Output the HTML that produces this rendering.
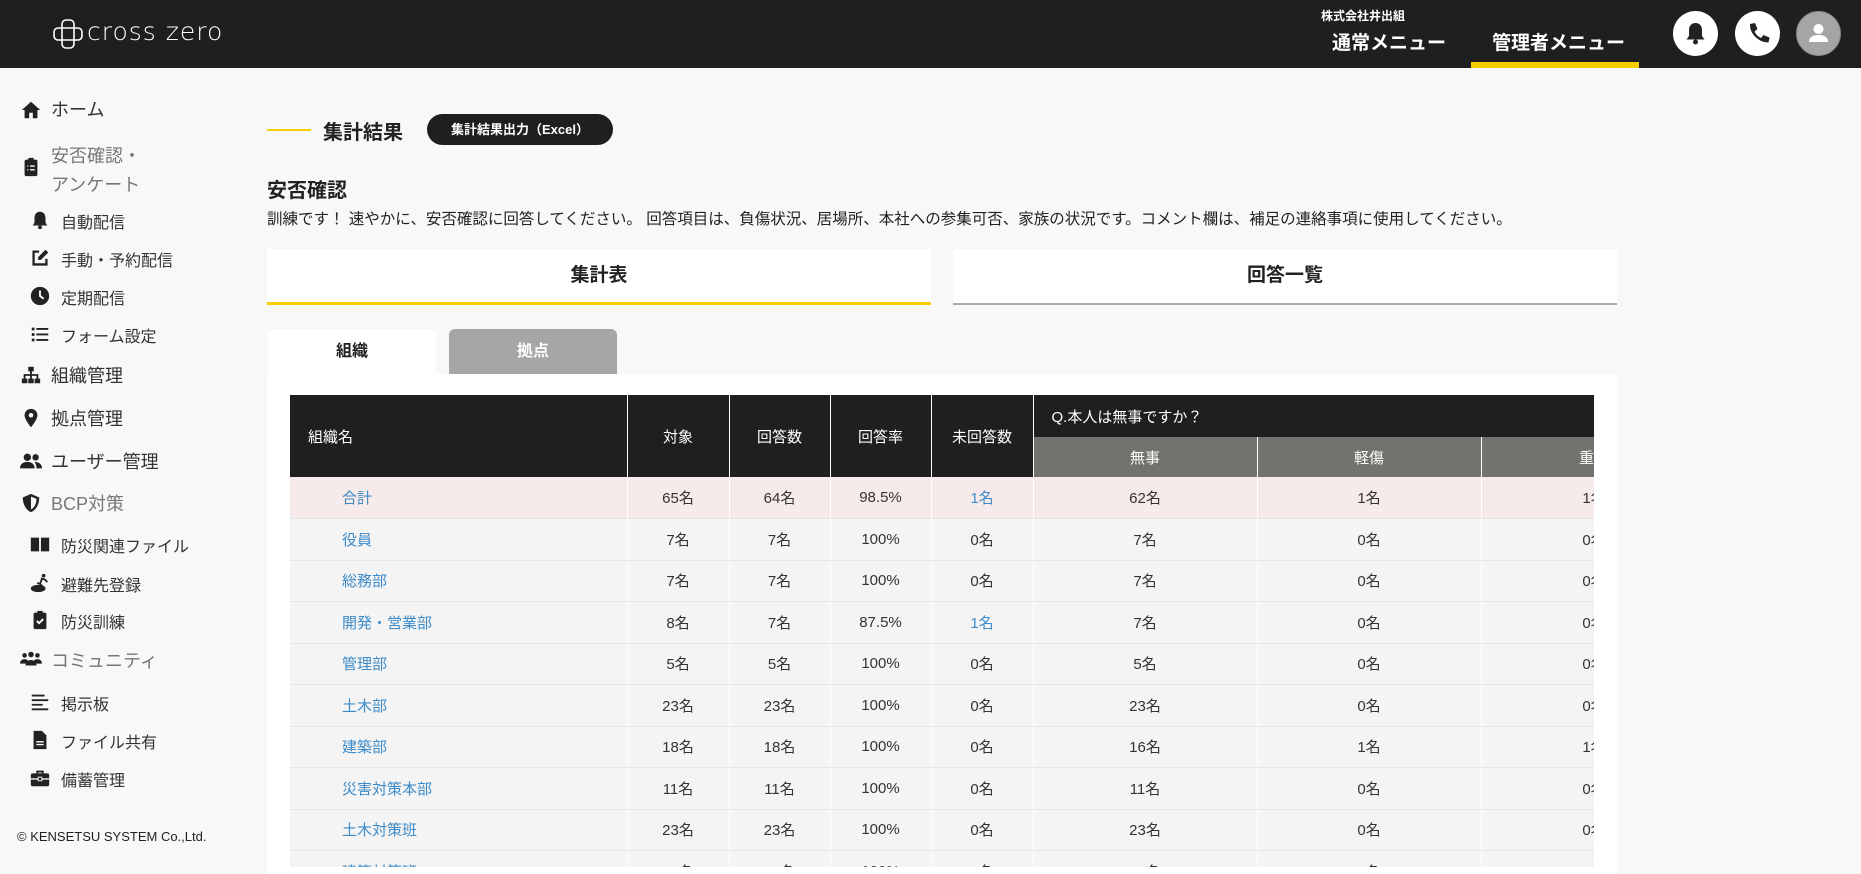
<!DOCTYPE html>
<html><head><meta charset="utf-8"><style>
*{margin:0;padding:0;box-sizing:border-box}
body{width:1861px;height:867px;overflow:hidden;background:#f8f8f8;font-family:"Liberation Sans","Noto Sans CJK JP",sans-serif;color:#222;position:relative}
.hd{position:absolute;left:0;top:0;width:1861px;height:68px;background:#1f1f1f;color:#fff}
.a{position:absolute}
.nav{font-size:18px;color:#333;white-space:nowrap}
.nav .i{position:absolute;left:20px;width:22px;height:22px}
.main{font-size:18px}
.sub{font-size:16px}
.g{color:#777}
.card{position:absolute;left:267px;top:374px;width:1350px;height:500px;background:#fff}
table{position:absolute;left:290px;top:395px;border-collapse:collapse;table-layout:fixed;font-size:15px}
td,th{height:41.5px;text-align:center;border-right:1px solid #fff;border-bottom:1px solid #e6e6e6;color:#333;background:#f4f4f4;font-weight:normal;white-space:nowrap;overflow:hidden}
th{background:#1f1f1f;color:#fff;border-bottom:none}
th.s{background:#74726d;height:40px}
td.n{text-align:left;padding-left:52px;color:#3d8bc9}
tr.p td{background:#f6eaea}
.b{color:#3d8bc9!important}
</style></head><body>
<div class="hd">
 <svg class="a" style="left:53px;top:19px" width="30" height="30" viewBox="0 0 30 30" fill="none" stroke="#fff" stroke-width="1.6"><rect x="9" y="1" width="12" height="28" rx="4"/><rect x="1" y="9" width="28" height="12" rx="4"/></svg>
 <div class="a" style="left:87px;top:17px;font-size:25px;font-weight:300;letter-spacing:1px;font-family:'DejaVu Sans','Liberation Sans',sans-serif;font-weight:200">cross zero</div>
 <div class="a" style="left:1321px;top:7px;font-size:12px;font-weight:bold">株式会社井出組</div>
 <div class="a" style="left:1332px;top:28px;font-size:19px;font-weight:bold">通常メニュー</div>
 <div class="a" style="left:1492px;top:28px;font-size:19px;font-weight:bold">管理者メニュー</div>
 <div class="a" style="left:1471px;top:62px;width:168px;height:6px;background:#f7cf00"></div>
 <div class="a" style="left:1673px;top:11px;width:45px;height:45px;border-radius:50%;background:#fff"><svg width="45" height="45" viewBox="0 0 45 45"><path d="M22.5 12c-4 0-6.5 3-6.5 7v6l-2.5 3.5h18L29 25v-6c0-4-2.5-7-6.5-7z" fill="#222"/><circle cx="22.5" cy="31" r="2.5" fill="#222"/></svg></div>
 <div class="a" style="left:1735px;top:11px;width:45px;height:45px;border-radius:50%;background:#fff"><svg width="45" height="45" viewBox="0 0 45 45"><path d="M15 13l5-1 2.5 6-3 2.5c1.5 3 3.5 5 6.5 6.5l2.5-3 6 2.5-1 5c-9 0-19-8-18.5-18.5z" fill="#222"/></svg></div>
 <div class="a" style="left:1796px;top:11px;width:45px;height:45px;border-radius:50%;background:#a5a5a5;border:1px solid #888"><svg width="43" height="43" viewBox="0 0 43 43"><circle cx="21.5" cy="17" r="5" fill="#fff"/><path d="M12 30c0-5 4-7 9.5-7s9.5 2 9.5 7z" fill="#fff"/></svg></div>
</div>

<div class="nav main a" style="left:0;top:98px;width:250px;height:24px"><svg class="i" viewBox="0 0 24 24" style="top:1px"><path d="M12 3L2 12h3v9h5v-6h4v6h5v-9h3z" fill="#222"/></svg><span class="a" style="left:51px;top:-2px">ホーム</span></div>
<div class="nav main a" style="left:0;top:140px;width:250px;height:50px"><svg class="i" viewBox="0 0 24 24" style="top:16px"><rect x="5" y="4" width="14" height="18" rx="2" fill="#222"/><rect x="9" y="2" width="6" height="4" rx="1" fill="#222"/><path d="M8 11h1M11 11h5M8 15h1M11 15h5" stroke="#fff" stroke-width="1.5"/></svg><span class="a g" style="left:51px;top:2px;line-height:29px">安否確認・<br>アンケート</span></div>
<div class="nav sub a" style="left:9px;top:209px"><svg class="i" viewBox="0 0 24 24"><path d="M12 3c-4 0-6 3-6 7v5l-2 3h16l-2-3v-5c0-4-2-7-6-7z" fill="#222"/><circle cx="12" cy="20" r="2" fill="#222"/></svg><span class="a" style="left:52px;top:0">自動配信</span></div>
<div class="nav sub a" style="left:9px;top:247px"><svg class="i" viewBox="0 0 24 24"><path d="M11 5H5v14h14v-6" stroke="#222" stroke-width="2.5" fill="none"/><path d="M18 3l3 3-8 8H10v-3z" fill="#222"/></svg><span class="a" style="left:52px;top:0">手動・予約配信</span></div>
<div class="nav sub a" style="left:9px;top:285px"><svg class="i" viewBox="0 0 24 24"><circle cx="12" cy="12" r="10" fill="#222"/><path d="M12 6v6l4 3" stroke="#fff" stroke-width="2" fill="none"/></svg><span class="a" style="left:52px;top:0">定期配信</span></div>
<div class="nav sub a" style="left:9px;top:323px"><svg class="i" viewBox="0 0 24 24"><path d="M3 5h3v3H3zM3 11h3v3H3zM3 17h3v3H3zM8 5.5h13v2H8zM8 11.5h13v2H8zM8 17.5h13v2H8z" fill="#222"/></svg><span class="a" style="left:52px;top:0">フォーム設定</span></div>
<div class="nav main a" style="left:0;top:364px"><svg class="i" viewBox="0 0 24 24"><path d="M9 3h6v5H9zM2 16h6v5H2zM9 16h6v5H9zM16 16h6v5h-6zM11 8h2v3h7v5h-2v-3h-5v3h-2v-3H6v3H4v-5h7z" fill="#222"/></svg><span class="a" style="left:51px;top:-2px">組織管理</span></div>
<div class="nav main a" style="left:0;top:407px"><svg class="i" viewBox="0 0 24 24"><path d="M12 2a7 7 0 0 0-7 7c0 5 7 13 7 13s7-8 7-13a7 7 0 0 0-7-7z" fill="#222"/><circle cx="12" cy="9" r="2.5" fill="#f8f8f8"/></svg><span class="a" style="left:51px;top:-2px">拠点管理</span></div>
<div class="nav main a" style="left:0;top:450px"><svg class="i" viewBox="0 0 24 24"><circle cx="8" cy="8" r="4" fill="#222"/><circle cx="17" cy="8" r="3.5" fill="#222"/><path d="M0 20c0-5 4-7 8-7s8 2 8 7zM16 13c4 0 8 2 8 7h-6c0-3-1-5-2-7z" fill="#222"/></svg><span class="a" style="left:51px;top:-2px">ユーザー管理</span></div>
<div class="nav main a" style="left:0;top:492px"><svg class="i" viewBox="0 0 24 24"><path d="M12 2l9 4c0 8-4 14-9 16-5-2-9-8-9-16z" fill="#222"/><path d="M12 5l6 2.5c0 6-3 10-6 11.5z" fill="#f8f8f8"/></svg><span class="a g" style="left:51px;top:-2px">BCP対策</span></div>
<div class="nav sub a" style="left:9px;top:533px"><svg class="i" viewBox="0 0 24 24"><path d="M2 5h9v15H2zM13 5h9v15h-9z" fill="#222"/></svg><span class="a" style="left:52px;top:0">防災関連ファイル</span></div>
<div class="nav sub a" style="left:9px;top:572px"><svg class="i" viewBox="0 0 24 24"><ellipse cx="10" cy="18" rx="8" ry="4" fill="#222"/><circle cx="16" cy="4" r="2" fill="#222"/><path d="M13 7l4 1 3 3M14 8l-2 5 3 3M12 13l-3-1" stroke="#222" stroke-width="2" fill="none"/></svg><span class="a" style="left:52px;top:0">避難先登録</span></div>
<div class="nav sub a" style="left:9px;top:609px"><svg class="i" viewBox="0 0 24 24"><rect x="5" y="4" width="14" height="18" rx="2" fill="#222"/><rect x="9" y="2" width="6" height="4" rx="1" fill="#222"/><path d="M8.5 13l2.5 2.5 4.5-4.5" stroke="#fff" stroke-width="2" fill="none"/></svg><span class="a" style="left:52px;top:0">防災訓練</span></div>
<div class="nav main a" style="left:0;top:649px"><svg class="i" viewBox="0 0 24 24"><circle cx="5" cy="7" r="2.5" fill="#222"/><circle cx="12" cy="6" r="3" fill="#222"/><circle cx="19" cy="7" r="2.5" fill="#222"/><path d="M0 16c0-3 2-5 5-5s5 2 5 5zM6 18c0-4 3-6 6-6s6 2 6 6zM14 16c0-3 2-5 5-5s5 2 5 5z" fill="#222"/></svg><span class="a g" style="left:51px;top:-2px">コミュニティ</span></div>
<div class="nav sub a" style="left:9px;top:691px"><svg class="i" viewBox="0 0 24 24"><path d="M3 4h14v2H3zM3 9h18v2H3zM3 14h12v2H3zM3 19h18v2H3z" fill="#222"/></svg><span class="a" style="left:52px;top:0">掲示板</span></div>
<div class="nav sub a" style="left:9px;top:729px"><svg class="i" viewBox="0 0 24 24"><path d="M5 2h9l5 5v15H5z" fill="#222"/><path d="M8 14h8M8 17h8" stroke="#fff" stroke-width="1.5"/></svg><span class="a" style="left:52px;top:0">ファイル共有</span></div>
<div class="nav sub a" style="left:9px;top:767px"><svg class="i" viewBox="0 0 24 24"><path d="M8 4h8v3h-2V6h-4v1H8z" fill="#222"/><rect x="2" y="7" width="20" height="14" rx="2" fill="#222"/><path d="M2 13h20" stroke="#f8f8f8" stroke-width="1.5"/><rect x="10" y="11" width="4" height="4" fill="#222" stroke="#f8f8f8"/></svg><span class="a" style="left:52px;top:0">備蓄管理</span></div>
<div class="a" style="left:17px;top:829px;font-size:13px;color:#222">© KENSETSU SYSTEM Co.,Ltd.</div>

<div class="a" style="left:267px;top:129px;width:44px;height:2px;background:#f7cf00"></div>
<div class="a" style="left:323px;top:116px;font-size:20px;font-weight:bold">集計結果</div>
<div class="a" style="left:427px;top:114px;width:186px;height:31px;border-radius:16px;background:#1f1f1f;color:#fff;font-size:13px;font-weight:bold;text-align:center;line-height:31px">集計結果出力（Excel）</div>
<div class="a" style="left:267px;top:174px;font-size:20px;font-weight:bold">安否確認</div>
<div class="a" style="left:267px;top:207px;font-size:15.5px;color:#222;white-space:nowrap">訓練です！ 速やかに、安否確認に回答してください。 回答項目は、負傷状況、居場所、本社への参集可否、家族の状況です。コメント欄は、補足の連絡事項に使用してください。</div>

<div class="a" style="left:267px;top:249px;width:664px;height:56px;background:#fff;border-bottom:3px solid #f7cf00;text-align:center;font-size:19px;font-weight:bold;line-height:54px">集計表</div>
<div class="a" style="left:953px;top:249px;width:664px;height:56px;background:#fff;border-bottom:2px solid #aaa;text-align:center;font-size:19px;font-weight:bold;line-height:54px">回答一覧</div>

<div class="a" style="left:268px;top:329px;width:168px;height:46px;background:#fff;border-radius:6px 6px 0 0;text-align:center;font-size:16px;font-weight:bold;line-height:46px">組織</div>
<div class="a" style="left:449px;top:329px;width:168px;height:45px;background:#a6a6a6;color:#fff;border-radius:6px 6px 0 0;text-align:center;font-size:16px;font-weight:bold;line-height:45px">拠点</div>

<div class="card"></div>
<div class="a" style="left:290px;top:395px;width:1304px;height:472px;overflow:hidden">
<table style="left:0;top:0;width:1417px">
<colgroup><col style="width:337px"><col style="width:102px"><col style="width:101px"><col style="width:101px"><col style="width:102px"><col style="width:224px"><col style="width:224px"><col style="width:226px"></colgroup>
<tr><th rowspan="2" style="text-align:left;padding-left:18px;height:82px">組織名</th><th rowspan="2">対象</th><th rowspan="2">回答数</th><th rowspan="2">回答率</th><th rowspan="2">未回答数</th><th colspan="3" style="text-align:left;padding-left:18px;height:42px">Q.本人は無事ですか？</th></tr>
<tr><th class="s">無事</th><th class="s">軽傷</th><th class="s">重傷</th></tr>
<tr class="p"><td class="n">合計</td><td>65名</td><td>64名</td><td>98.5%</td><td class="b">1名</td><td>62名</td><td>1名</td><td>1名</td></tr>
<tr><td class="n">役員</td><td>7名</td><td>7名</td><td>100%</td><td>0名</td><td>7名</td><td>0名</td><td>0名</td></tr>
<tr><td class="n">総務部</td><td>7名</td><td>7名</td><td>100%</td><td>0名</td><td>7名</td><td>0名</td><td>0名</td></tr>
<tr><td class="n">開発・営業部</td><td>8名</td><td>7名</td><td>87.5%</td><td class="b">1名</td><td>7名</td><td>0名</td><td>0名</td></tr>
<tr><td class="n">管理部</td><td>5名</td><td>5名</td><td>100%</td><td>0名</td><td>5名</td><td>0名</td><td>0名</td></tr>
<tr><td class="n">土木部</td><td>23名</td><td>23名</td><td>100%</td><td>0名</td><td>23名</td><td>0名</td><td>0名</td></tr>
<tr><td class="n">建築部</td><td>18名</td><td>18名</td><td>100%</td><td>0名</td><td>16名</td><td>1名</td><td>1名</td></tr>
<tr><td class="n">災害対策本部</td><td>11名</td><td>11名</td><td>100%</td><td>0名</td><td>11名</td><td>0名</td><td>0名</td></tr>
<tr><td class="n">土木対策班</td><td>23名</td><td>23名</td><td>100%</td><td>0名</td><td>23名</td><td>0名</td><td>0名</td></tr>
<tr><td class="n">建築対策班</td><td>18名</td><td>18名</td><td>100%</td><td>0名</td><td>16名</td><td>1名</td><td>1名</td></tr>
</table>
</div>
</body></html>
